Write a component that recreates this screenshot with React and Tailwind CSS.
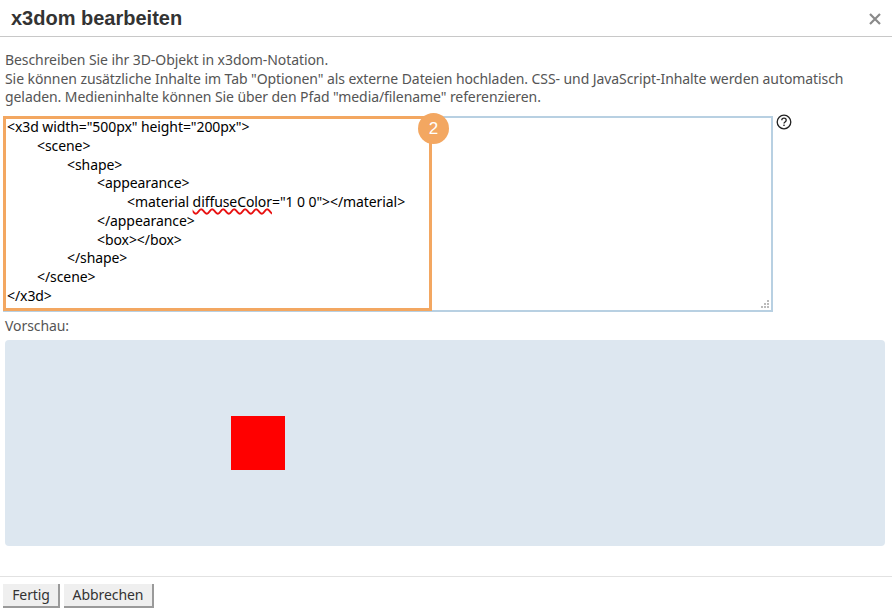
import React from 'react';

const codeLines = [
  [0, '<x3d width="500px" height="200px">'],
  [1, '<scene>'],
  [2, '<shape>'],
  [3, '<appearance>'],
  [4, null],
  [3, '</appearance>'],
  [3, '<box></box>'],
  [2, '</shape>'],
  [1, '</scene>'],
  [0, '</x3d>'],
];

const indents = ['pl-0', 'pl-[30px]', 'pl-[60px]', 'pl-[90px]', 'pl-[120px]'];

const HelpIcon = () => (
  <svg width="16" height="16" viewBox="0 0 16 16" fill="none" className="ml-[3px] mt-[-2px] shrink-0">
    <circle cx="8" cy="8" r="6.8" stroke="#222" strokeWidth="1.3" />
    <path d="M5.8 6.3C5.8 5 6.8 4.2 8 4.2s2.2.8 2.2 2c0 1.7-2.2 1.7-2.2 3.3" stroke="#222" strokeWidth="1.3" />
    <rect x="7.3" y="10.6" width="1.4" height="1.4" fill="#222" />
  </svg>
);

export default function App() {
  return (
    <div className="w-[892px] h-[616px] bg-white flex flex-col overflow-hidden font-['Noto_Sans',sans-serif] text-[14px] tracking-[-0.08px] text-[#555]">
      {/* Header */}
      <div className="h-[37px] shrink-0 border-b border-[#c8c8c8] flex items-center justify-between pl-[11px] pr-[10px]">
        <h2 className="font-['Liberation_Sans',sans-serif] font-bold text-[20px] tracking-normal text-[#333]">x3dom bearbeiten</h2>
        <svg width="14" height="14" viewBox="0 0 14 14" className="mt-[1px]">
          <path d="M2 2l10 10M12 2L2 12" stroke="#8a8a8a" strokeWidth="2.2" />
        </svg>
      </div>

      {/* Body */}
      <div className="flex-1 pl-[5px] pt-[14px]">
        <p className="leading-[18.6px] w-[870px]">
          Beschreiben Sie ihr 3D-Objekt in x3dom-Notation.
          <br />
          Sie können zusätzliche Inhalte im Tab "Optionen" als externe Dateien hochladen. CSS- und JavaScript-Inhalte werden automatisch geladen. Medieninhalte können Sie über den Pfad "media/filename" referenzieren.
        </p>

        <div className="flex mt-[9px] ml-[-2px]">
          <div className="relative w-[770px] h-[196px] border-2 border-[#b8d0e2] bg-white">
            <div className="pl-[2px] pt-[0.5px] leading-[18.7px] text-[14px] text-black">
              {codeLines.map(([level, text], i) => (
                <div key={i} className={indents[level]}>
                  {text ?? (
                    <>
                      {'<material '}
                      <span className="underline decoration-wavy decoration-[#e81010] decoration-[1.5px]">diffuseColor</span>
                      {'="1 0 0"></material>'}
                    </>
                  )}
                </div>
              ))}
            </div>
            {/* resize handle */}
            <svg width="10" height="10" viewBox="0 0 10 10" className="absolute right-[1px] bottom-[1px]">
              <path d="M7 1h2v2H7zM4 4h2v2H4zM7 4h2v2H7zM1 7h2v2H1zM4 7h2v2H4zM7 7h2v2H7z" fill="#bbb" />
            </svg>
            {/* highlight overlay */}
            <div className="absolute left-[-2px] top-[-2px] w-[429px] h-[195px] border-[3px] border-[#f3a761]" />
            <div className="absolute left-[413px] top-[-5px] w-[31px] h-[31px] rounded-full bg-[#f3a761] text-white flex items-center justify-center font-['Liberation_Sans',sans-serif] text-[17px]">
              2
            </div>
          </div>
          <HelpIcon />
        </div>

        <div className="mt-[4px] leading-[19px]">Vorschau:</div>

        <div className="mt-[5px] w-[880px] h-[206px] rounded-[4px] bg-[#dde7f0] pl-[226px] pt-[76px]">
          <div className="w-[54px] h-[54px] bg-[#ff0000]" />
        </div>
      </div>

      {/* Footer */}
      <div className="h-[40px] shrink-0 border-t border-[#e2e2e2] flex gap-[4px] pl-[3px] pt-[7px]">
        <button className="h-[24px] w-[57px] pl-[1px] bg-[#efefef] border-r-2 border-b-2 border-[#9a9a9a] text-[#333] leading-none">Fertig</button>
        <button className="h-[24px] w-[90px] bg-[#efefef] border-r-2 border-b-2 border-[#9a9a9a] text-[#333] leading-none">Abbrechen</button>
      </div>
    </div>
  );
}
